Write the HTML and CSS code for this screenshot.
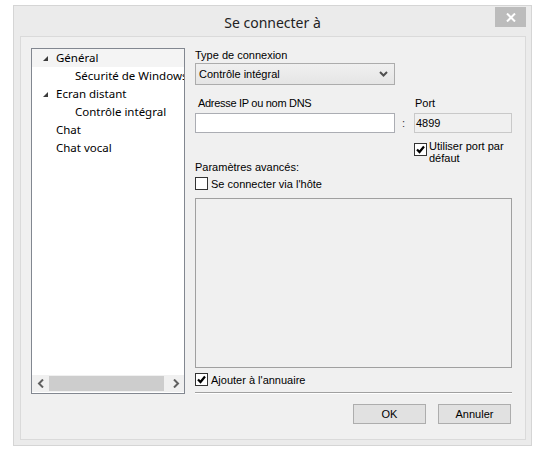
FILE: index.html
```html
<!DOCTYPE html>
<html lang="fr">
<head>
<meta charset="utf-8">
<title>Se connecter à</title>
<link rel="stylesheet" href="styles.css">
</head>
<body>
<div class="window">
  <div class="titlebar">
    <span class="title">Se connecter à</span>
    <div class="close"><svg width="10" height="9" viewBox="0 0 10 9"><path d="M1 0.5 L9 8.5 M9 0.5 L1 8.5" stroke="#fff" stroke-width="2"/></svg></div>
  </div>
  <div class="client">
    <div class="tree">
      <div class="tree-items">
        <div class="node sel"><svg class="tri" width="6" height="6" viewBox="0 0 6 6"><path d="M5 0 L5 5 L0 5 Z" fill="#3c3c3c"/></svg>Général</div>
        <div class="node l2">Sécurité de Windows</div>
        <div class="node"><svg class="tri" width="6" height="6" viewBox="0 0 6 6"><path d="M5 0 L5 5 L0 5 Z" fill="#3c3c3c"/></svg>Ecran distant</div>
        <div class="node l2">Contrôle intégral</div>
        <div class="node">Chat</div>
        <div class="node">Chat vocal</div>
      </div>
      <div class="hscroll">
        <div class="arrow"><svg width="8" height="9" viewBox="0 0 8 9"><path d="M6 0.5 L2 4.5 L6 8.5" stroke="#606060" stroke-width="2" fill="none"/></svg></div>
        <div class="track"><div class="thumb"></div></div>
        <div class="arrow"><svg width="8" height="9" viewBox="0 0 8 9"><path d="M2 0.5 L6 4.5 L2 8.5" stroke="#606060" stroke-width="2" fill="none"/></svg></div>
      </div>
    </div>
    <div class="form">
      <div class="label">Type de connexion</div>
      <div class="combo"><span>Contrôle intégral</span><svg width="9" height="6" viewBox="0 0 9 6"><path d="M1 1 L4.5 4.5 L8 1" stroke="#505050" stroke-width="2" fill="none"/></svg></div>
      <div class="addr-row">
        <div class="addr-col">
          <div class="label lab-addr">Adresse IP ou nom DNS</div>
          <div class="input"></div>
        </div>
        <div class="colon">:</div>
        <div class="port-col">
          <div class="label">Port</div>
          <div class="input disabled">4899</div>
        </div>
      </div>
      <div class="port-check">
        <span class="check on"><svg width="11" height="11" viewBox="0 0 11 11"><path d="M2 5.5 L4.5 8 L9 2.5" stroke="#000" stroke-width="2.2" fill="none"/></svg></span>
        <span class="check-text">Utiliser port par<br>défaut</span>
      </div>
      <div class="label lab-adv">Paramètres avancés:</div>
      <div class="checkrow"><span class="check"></span><span>Se connecter via l'hôte</span></div>
      <div class="panel"></div>
      <div class="checkrow add"><span class="check on"><svg width="11" height="11" viewBox="0 0 11 11"><path d="M2 5.5 L4.5 8 L9 2.5" stroke="#000" stroke-width="2.2" fill="none"/></svg></span><span>Ajouter à l'annuaire</span></div>
      <div class="sep"></div>
      <div class="buttons">
        <div class="btn">OK</div>
        <div class="btn">Annuler</div>
      </div>
    </div>
  </div>
</div>
</body>
</html>
```

FILE: styles.css
```css
*, *::before, *::after {
  box-sizing: border-box;
}
html, body {
  margin: 0;
  padding: 0;
  background: #ffffff;
}
body {
  padding: 5px 0 0 13px;
}
.window {
  width: 519px;
  height: 441px;
  border: 1px solid #d5d5d5;
  background: #ebebeb;
  display: flex;
  flex-direction: column;
}
.titlebar {
  height: 30px;
  flex-shrink: 0;
  position: relative;
  display: flex;
  justify-content: center;
  align-items: center;
}
.title {
  font-family: "Noto Sans", "Open Sans", sans-serif;
  font-size: 14px;
  color: #222;
  margin-top: 2px;
}
.close {
  position: absolute;
  right: 5px;
  top: 1px;
  width: 31px;
  height: 20px;
  background: #bcbcbc;
  display: flex;
  align-items: center;
  justify-content: center;
}
.client {
  margin: 0 5px 5px 6px;
  flex: 1;
  border: 1px solid #dadada;
  background: #f0f0f0;
  display: flex;
  align-items: flex-start;
  padding: 11px 0 0 10px;
}
.tree {
  width: 154px;
  height: 346px;
  flex-shrink: 0;
  border: 1px solid #828790;
  background: #fff;
  display: flex;
  flex-direction: column;
  font-family: "Noto Sans", "Open Sans", sans-serif;
  font-size: 11.5px;
  color: #000;
}
.tree-items {
  flex: 1;
  overflow: hidden;
}
.node {
  height: 18px;
  line-height: 18px;
  padding-left: 24px;
  white-space: nowrap;
  position: relative;
  display: flex;
  align-items: center;
}
.node.sel {
  background: #f4f4f4;
}
.node.l2 {
  padding-left: 43px;
}
.tri {
  position: absolute;
  left: 11px;
  top: 7px;
}
.hscroll {
  height: 17px;
  margin-bottom: 1px;
  background: #f0f0f0;
  display: flex;
  flex-shrink: 0;
}
.arrow {
  width: 17px;
  display: flex;
  align-items: center;
  justify-content: center;
}
.track {
  flex: 1;
  padding: 1px 0;
}
.thumb {
  width: 115px;
  height: 15px;
  background: #cdcdcd;
}
.form {
  margin-left: 10px;
  width: 317px;
  display: flex;
  flex-direction: column;
  font-family: "Liberation Sans", Arial, sans-serif;
  font-size: 11px;
  color: #000;
}
.label {
  height: 14px;
  line-height: 14px;
  white-space: nowrap;
}
.combo {
  margin-top: 1px;
  width: 200px;
  height: 22px;
  border: 1px solid #acacac;
  background: linear-gradient(#f0f0f0, #e5e5e5);
  display: flex;
  align-items: center;
  justify-content: space-between;
  padding: 0 6px 0 3px;
}
.addr-row {
  margin-top: 11px;
  display: flex;
}
.addr-col {
  width: 200px;
}
.lab-addr {
  padding-left: 3px;
  letter-spacing: -0.3px;
}
.input {
  margin-top: 3px;
  height: 20px;
  border: 1px solid #abadb3;
  background: #fff;
  line-height: 18px;
  padding-left: 1px;
}
.input.disabled {
  background: #f0f0f0;
  border-color: #c9c9c9;
  color: #000;
}
.colon {
  width: 19px;
  padding-top: 20px;
  padding-left: 7px;
  line-height: 14px;
  color: #333;
}
.port-col {
  width: 98px;
}
.port-col .label {
  padding-left: 1px;
}
.port-check {
  margin-top: 10px;
  margin-left: 219px;
  height: 14px;
  display: flex;
  align-items: flex-start;
  gap: 2px;
}
.check {
  width: 13px;
  height: 13px;
  border: 1px solid #333;
  background: #fff;
  display: flex;
  align-items: center;
  justify-content: center;
  flex-shrink: 0;
}
.check-text {
  line-height: 12px;
  margin-top: -3px;
}
.lab-adv {
  margin-top: 3px;
}
.checkrow {
  margin-top: 2px;
  display: flex;
  align-items: center;
  gap: 3px;
  height: 15px;
}
.panel {
  margin-top: 7px;
  height: 170px;
  border: 1px solid #a0a0a0;
  background: #f0f0f0;
}
.checkrow.add {
  margin-top: 4px;
}
.sep {
  margin-top: 5px;
  height: 2px;
  border-top: 1px solid #a0a0a0;
  border-bottom: 1px solid #fff;
}
.buttons {
  margin-top: 10px;
  display: flex;
  justify-content: flex-end;
  gap: 12px;
  padding-right: 1px;
}
.btn {
  width: 73px;
  height: 20px;
  border: 1px solid #adadad;
  background: #e1e1e1;
  text-align: center;
  line-height: 18px;
}
```
